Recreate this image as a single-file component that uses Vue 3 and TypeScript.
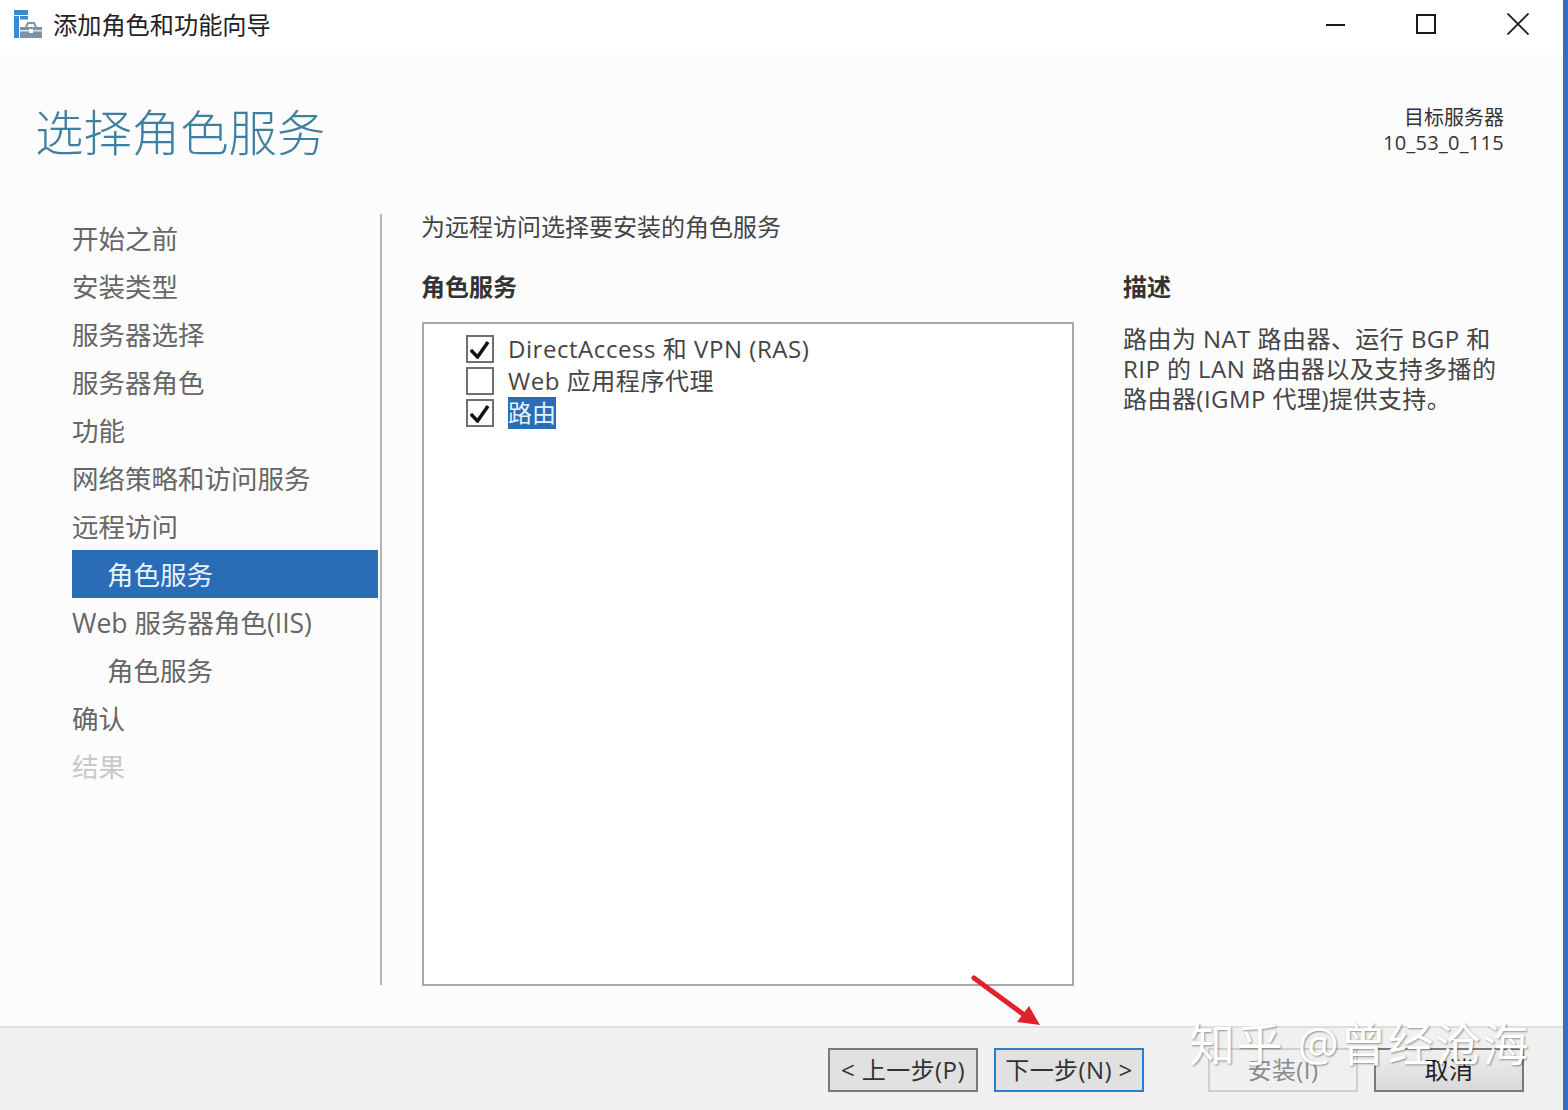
<script setup lang="ts">
interface NavItem { label: string; sub?: boolean; active?: boolean; off?: boolean }
const nav: NavItem[] = [
  { label: '开始之前' },
  { label: '安装类型' },
  { label: '服务器选择' },
  { label: '服务器角色' },
  { label: '功能' },
  { label: '网络策略和访问服务' },
  { label: '远程访问' },
  { label: '角色服务', sub: true, active: true },
  { label: 'Web 服务器角色(IIS)' },
  { label: '角色服务', sub: true },
  { label: '确认' },
  { label: '结果', off: true },
]
const roles = [
  { label: 'DirectAccess 和 VPN (RAS)', on: true, sel: false },
  { label: 'Web 应用程序代理', on: false, sel: false },
  { label: '路由', on: true, sel: true },
]
</script>

<template>
  <div class="win">
    <div class="frame">
      <header class="titlebar">
        <svg class="appicon" width="28" height="28" viewBox="0 0 28 28">
          <rect x="0" y="0" width="14" height="5" fill="#3a8ad0" />
          <rect x="0" y="6" width="5" height="22" fill="#3a8ad0" />
          <rect x="6" y="6" width="8" height="3.500" fill="#3a8ad0" />
          <path d="M6 17h22v11H6z" fill="#7c93a8" />
          <path d="M12 17l2-4h6l2 4" fill="none" stroke="#7c93a8" stroke-width="2" />
          <rect x="6" y="20" width="22" height="1.500" fill="#dfe6ec" />
          <rect x="15" y="19" width="4" height="4" fill="#fff" />
        </svg>
        <span class="wintitle">添加角色和功能向导</span>
        <div class="winctl">
          <svg width="22" height="22" viewBox="0 0 22 22"><path d="M3 12h19" stroke="#1a1a1a" stroke-width="2" /></svg>
          <svg width="22" height="22" viewBox="0 0 22 22"><rect x="2" y="2" width="18" height="18" fill="none" stroke="#1a1a1a" stroke-width="2" /></svg>
          <svg width="22" height="22" viewBox="0 0 22 22"><path d="M0.500 0.500l21 21M21.500 0.500l-21 21" stroke="#1a1a1a" stroke-width="1.800" /></svg>
        </div>
      </header>

      <div class="content">
        <div class="head">
          <h1 class="title">选择角色服务</h1>
          <div class="server">
            <div>目标服务器</div>
            <div class="serverid">10_53_0_115</div>
          </div>
        </div>

        <div class="body">
          <nav class="nav">
            <div
              v-for="(item, i) in nav"
              :key="i"
              class="navitem"
              :class="{ sub: item.sub, active: item.active, off: item.off }"
            >{{ item.label }}</div>
          </nav>

          <main class="main">
            <p class="lead">为远程访问选择要安装的角色服务</p>
            <div class="cols">
              <section class="rolecol">
                <h2 class="h">角色服务</h2>
                <div class="listbox">
                  <div v-for="r in roles" :key="r.label" class="role">
                    <span class="check">
                      <svg v-if="r.on" width="20" height="20" viewBox="0 0 20 20">
                        <path d="M0.800 11L7.500 18L18 3" fill="none" stroke="#111" stroke-width="3.500" />
                      </svg>
                    </span>
                    <span class="rolelabel" :class="{ sel: r.sel }">{{ r.label }}</span>
                  </div>
                </div>
              </section>
              <section class="desc">
                <h2 class="h">描述</h2>
                <p class="desctext">路由为 NAT 路由器、运行 BGP 和 RIP 的 LAN 路由器以及支持多播的路由器(IGMP 代理)提供支持。</p>
              </section>
            </div>
          </main>
        </div>
      </div>

      <footer class="footer">
        <button class="btn">&lt; 上一步(P)</button>
        <button class="btn focus">下一步(N) &gt;</button>
        <button class="btn install">安装(I)</button>
        <button class="btn cancel">取消</button>
      </footer>

      <svg class="arrow" width="76" height="54" viewBox="0 0 76 54">
        <path d="M3 3L56 42" stroke="#e0202c" stroke-width="5" stroke-linecap="round" />
        <path d="M69 50L46 47L58 31Z" fill="#e0202c" />
      </svg>
      <div class="watermark">知乎 @曾经沧海</div>
    </div>
    <div class="edge"></div>
  </div>
</template>

<style>
html, body { margin: 0; padding: 0; background: #fff; }
</style>

<style scoped>
.win {
  width: 1568px;
  height: 1110px;
  display: flex;
  overflow: hidden;
  font-family: "Open Sans", "Noto Sans CJK SC", sans-serif;
  color: #3a3a3a;
}
.frame {
  position: relative;
  flex: 1;
  display: flex;
  flex-direction: column;
  min-width: 0;
}
.edge { width: 5px; background: #2f72bd; }
.titlebar {
  height: 55px;
  flex: none;
  display: flex;
  align-items: center;
  padding-left: 14px;
  background: #fff;
}
.appicon { margin-top: -7px; }
.wintitle {
  margin-left: 11px;
  margin-top: -9px;
  font-size: 24.200px;
  color: #222;
}
.winctl {
  margin-left: auto;
  margin-right: 34px;
  margin-top: -7px;
  display: flex;
  gap: 70px;
}
.content {
  flex: 1;
  min-height: 0;
  display: flex;
  flex-direction: column;
  background: #fcfcfc;
}
.head {
  height: 159px;
  flex: none;
  display: flex;
  justify-content: space-between;
  padding: 0 59px 0 35px;
}
.title {
  margin: 42px 0 0;
  font-size: 48.400px;
  line-height: 70px;
  font-weight: 300;
  color: #3f7f9f;
}
.server {
  margin-top: 50px;
  text-align: right;
  font-size: 20px;
  line-height: 25px;
  color: #333;
}
.serverid { letter-spacing: 0.300px; }
.body {
  height: 771px;
  flex: none;
  display: flex;
}
.nav {
  width: 306px;
  margin-left: 72px;
  padding-right: 2px;
  border-right: 2px solid #b4b4b4;
  font-size: 26.500px;
}
.navitem {
  height: 48px;
  line-height: 50px;
  width: 306px;
  color: #666;
  white-space: nowrap;
}
.navitem.sub { padding-left: 35px; width: 271px; }
.navitem.active { background: #2a6cb6; color: #e8f2fb; line-height: 50px; }
.navitem.off { color: #c9c9c9; }
.main {
  flex: 1;
  min-width: 0;
  padding-left: 40px;
}
.lead {
  margin: 0 0 0 -1px;
  height: 50px;
  font-size: 24px;
  line-height: 26px;
  color: #444;
}
.cols { display: flex; margin-top: 10px; }
.rolecol { width: 652px; flex: none; }
.h {
  margin: 0;
  font-size: 24px;
  line-height: 26px;
  font-weight: 700;
  color: #333;
}
.rolecol .h { margin-left: -1px; }
.listbox {
  box-sizing: border-box;
  width: 652px;
  height: 664px;
  margin-top: 22px;
  padding: 9px 0 0 42px;
  border: 2px solid #a8a8a8;
  background: #fff;
}
.role {
  height: 32px;
  display: flex;
  align-items: center;
}
.check {
  box-sizing: border-box;
  width: 28px;
  height: 28px;
  border: 2px solid #707070;
  background: #fff;
  display: flex;
  align-items: center;
  justify-content: center;
}
.rolelabel {
  margin-left: 14px;
  font-size: 24px;
  line-height: 32px;
  letter-spacing: 0.550px;
  color: #444;
  white-space: nowrap;
}
.rolelabel.sel { background: #2a6cb6; color: #e8f2fb; letter-spacing: 0; }
.desc { width: 380px; margin-left: 49px; }
.desctext {
  margin: 24px 0 0;
  font-size: 24px;
  line-height: 30px;
  letter-spacing: 0.450px;
  color: #444;
}
.footer {
  height: 84px;
  flex: none;
  box-sizing: border-box;
  border-top: 2px solid #dedede;
  background: #f0f0f0;
  display: flex;
  justify-content: flex-end;
  align-items: flex-start;
  gap: 16px;
  padding: 20px 39px 0 0;
}
.btn {
  box-sizing: border-box;
  width: 150px;
  height: 44px;
  padding: 0;
  border: 2px solid #7a7a7a;
  background: #e1e1e1;
  font: inherit;
  font-size: 24px;
  line-height: 40px;
  letter-spacing: 0.400px;
  color: #333;
  white-space: nowrap;
}
.focus { border-color: #2f7ccf; }
.install {
  margin-left: 48px;
  background: #f0f0f0;
  border-color: #cfcfcf;
  color: #8c8c8c;
}
.cancel { background: linear-gradient(#f0f0f0, #d8d8d8); color: #222; }
.arrow {
  position: absolute;
  left: 971px;
  top: 975px;
}
.watermark {
  position: absolute;
  left: 1189px;
  top: 1013px;
  font-size: 46px;
  line-height: 60px;
  letter-spacing: 1.500px;
  color: #fff;
  white-space: nowrap;
  text-shadow: 1px 1px 2px rgba(0, 0, 0, 0.400);
}
</style>
